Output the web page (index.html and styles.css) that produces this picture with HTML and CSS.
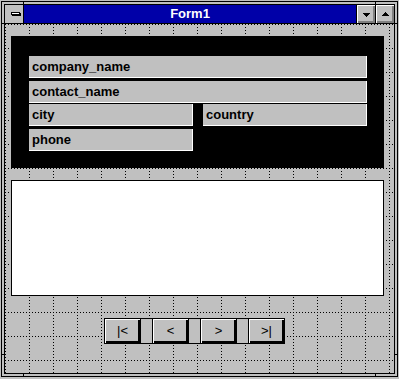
FILE: index.html
```html
<!DOCTYPE html>
<html>
<head>
<meta charset="utf-8">
<link rel="stylesheet" href="styles.css">
</head>
<body>
<div class="window">
  <div class="inner">
    <div class="titlebar">
      <div class="sysmenu">
        <svg width="18" height="18" viewBox="0 0 18 18" shape-rendering="crispEdges">
          <rect x="7" y="8" width="9" height="3" fill="#000"/>
          <rect x="6" y="7" width="9" height="3" fill="#000"/>
          <rect x="7" y="8" width="7" height="1" fill="#fff"/>
        </svg>
      </div>
      <div class="title">Form1</div>
      <div class="capbtn">
        <svg width="18" height="18" viewBox="0 0 18 18" shape-rendering="crispEdges" fill="#000">
          <rect x="6" y="8" width="7" height="1"/>
          <rect x="7" y="9" width="5" height="1"/>
          <rect x="8" y="10" width="3" height="1"/>
          <rect x="9" y="11" width="1" height="1"/>
        </svg>
      </div>
      <div class="capbtn">
        <svg width="18" height="18" viewBox="0 0 18 18" shape-rendering="crispEdges" fill="#000">
          <rect x="9" y="7" width="1" height="1"/>
          <rect x="8" y="8" width="3" height="1"/>
          <rect x="7" y="9" width="5" height="1"/>
          <rect x="6" y="10" width="7" height="1"/>
        </svg>
      </div>
    </div>
    <div class="client">
      <div class="panel">
        <div class="row r1"><div class="field wide">company_name</div></div>
        <div class="row r2"><div class="field wide">contact_name</div></div>
        <div class="row r3"><div class="field half">city</div><div class="field half">country</div></div>
        <div class="row r4"><div class="field half">phone</div></div>
      </div>
      <div class="listbox"></div>
      <div class="nav">
        <div class="btn">|&lt;</div>
        <div class="sep"></div>
        <div class="btn">&lt;</div>
        <div class="sep"></div>
        <div class="btn">&gt;</div>
        <div class="sep"></div>
        <div class="btn">&gt;|</div>
      </div>
    </div>
  </div>
  <div class="tick h tl"></div>
  <div class="tick h tr"></div>
  <div class="tick h bl"></div>
  <div class="tick h br"></div>
  <div class="tick v lt"></div>
  <div class="tick v rt"></div>
  <div class="tick v lb"></div>
  <div class="tick v rb"></div>
</div>
</body>
</html>
```

FILE: styles.css
```css
html, body {
  margin: 0;
  padding: 0;
  background: #c0c0c0;
}
body {
  font-family: "Liberation Sans", Arial, sans-serif;
  width: 399px;
  height: 379px;
  overflow: hidden;
}
.window {
  position: relative;
  margin: 1px 0 0 1px;
  width: 397px;
  height: 376px;
  box-sizing: border-box;
  border: 1px solid #000;
  padding: 2px;
  background: #c0c0c0;
}
.inner {
  box-sizing: border-box;
  height: 100%;
  border: 1px solid #000;
  display: flex;
  flex-direction: column;
}
.titlebar {
  display: flex;
  height: 18px;
  border-bottom: 1px solid #000;
  flex: none;
}
.sysmenu {
  width: 18px;
  height: 18px;
  border-right: 1px solid #000;
  background: #c0c0c0;
}
.sysmenu svg, .capbtn svg { display: block; }
.title {
  flex: 1;
  background: #0000a8;
  color: #fff;
  font-weight: bold;
  font-size: 13px;
  line-height: 18px;
  text-align: center;
}
.capbtn {
  width: 18px;
  height: 18px;
  border-left: 1px solid #000;
  background: #c0c0c0;
  box-shadow: inset 1px 1px #fff, inset -1px -1px #808080, inset -2px -2px #808080;
}
.client {
  flex: 1;
  padding: 12px 0 0 6px;
  background-color: #c0c0c0;
  background-image: url("data:image/svg+xml,%3Csvg xmlns='http://www.w3.org/2000/svg' width='24' height='24' shape-rendering='crispEdges'%3E%3Cpath fill='%23000' d='M0 0h1v1H0zM0 3h1v1H0zM0 6h1v1H0zM0 9h1v1H0zM0 12h1v1H0zM0 15h1v1H0zM0 18h1v1H0zM0 21h1v1H0zM3 0h1v1H3zM6 0h1v1H6zM9 0h1v1H9zM12 0h1v1H12zM15 0h1v1H15zM18 0h1v1H18zM21 0h1v1H21z'/%3E%3C/svg%3E");
  background-size: 24px 24px;
}
.panel {
  width: 373px;
  height: 132px;
  background: #000;
  padding: 20px 0 0 18px;
  box-sizing: border-box;
}
.row {
  display: flex;
  gap: 10px;
}
.r2, .r4 { margin-top: 3px; }
.r3 { margin-top: 1px; }
.field {
  box-sizing: border-box;
  height: 22px;
  background: #c0c0c0;
  border-right: 1px solid #fff;
  border-bottom: 1px solid #fff;
  padding-left: 3px;
  font-weight: bold;
  font-size: 13px;
  line-height: 21px;
  color: #000;
}
.wide { width: 338px; }
.half { width: 164px; }
.listbox {
  margin-top: 12px;
  width: 373px;
  height: 116px;
  box-sizing: border-box;
  border: 1px solid #000;
  background: #fff;
}
.nav {
  display: flex;
  margin: 22px 0 0 93px;
  height: 26px;
}
.btn {
  box-sizing: border-box;
  width: 37px;
  height: 26px;
  border: 1px solid #000;
  background: #c0c0c0;
  box-shadow: inset 1px 1px #fff, inset -2px -2px #000;
  font-size: 13px;
  line-height: 23px;
  text-align: center;
  color: #000;
}
.sep {
  box-sizing: border-box;
  width: 11px;
  height: 26px;
  border-top: 1px solid #000;
  border-bottom: 1px solid #000;
  background: #c0c0c0;
}
.tick {
  position: absolute;
  background: #000;
}
.tick.h { width: 4px; height: 1px; }
.tick.v { width: 1px; height: 4px; }
.tl { left: -1px; top: 21px; }
.tr { right: -1px; top: 21px; }
.bl { left: -1px; bottom: 21px; }
.br { right: -1px; bottom: 21px; }
.lt { left: 21px; top: -1px; }
.rt { right: 21px; top: -1px; }
.lb { left: 21px; bottom: -1px; }
.rb { right: 21px; bottom: -1px; }
```
